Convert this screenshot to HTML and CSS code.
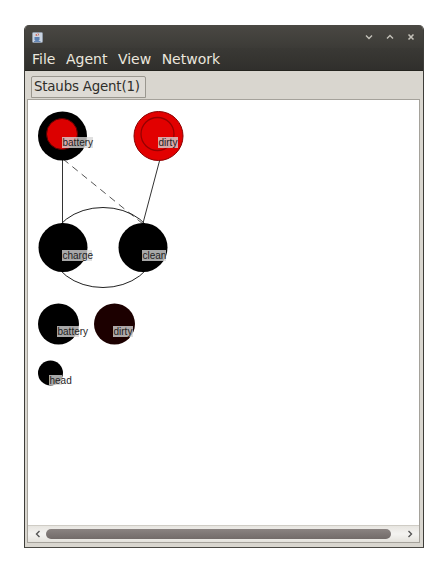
FILE: index.html
```html
<!DOCTYPE html>
<html>
<head>
<meta charset="utf-8">
<link rel="stylesheet" href="styles.css">
</head>
<body>
<div class="window">
  <div class="titlebar">
    <svg class="app-icon" width="11" height="11" viewBox="0 0 11 11">
      <rect x="0.5" y="0.5" width="10" height="10" rx="1" fill="#c9d3e0" stroke="#8e98a6"/>
      <path d="M4 2 q1 1 0 2 M6 1.5 q1 1 0 2" stroke="#d2452b" stroke-width="0.9" fill="none"/>
      <path d="M2.5 5 h5 v2.5 q0 1.5 -2.5 1.5 q-2.5 0 -2.5 -1.5z" fill="#5b7fb0"/>
      <rect x="2" y="9" width="6.5" height="0.9" fill="#5b7fb0"/>
    </svg>
    <div class="spacer"></div>
    <div class="controls">
      <svg width="8" height="6" viewBox="0 0 8 6"><path d="M1 1.5 L4 4.5 L7 1.5" stroke="#c4c1b9" stroke-width="1.4" fill="none"/></svg>
      <svg width="8" height="6" viewBox="0 0 8 6"><path d="M1 4.5 L4 1.5 L7 4.5" stroke="#c4c1b9" stroke-width="1.4" fill="none"/></svg>
      <svg width="8" height="8" viewBox="0 0 8 8"><path d="M1.5 1.5 L6.5 6.5 M6.5 1.5 L1.5 6.5" stroke="#c4c1b9" stroke-width="1.6" fill="none"/></svg>
    </div>
  </div>
  <div class="menubar">
    <span class="menu-item">File</span>
    <span class="menu-item">Agent</span>
    <span class="menu-item">View</span>
    <span class="menu-item">Network</span>
  </div>
  <div class="tabarea">
    <div class="tab">Staubs Agent(1)</div>
    <div class="panel">
      <div class="canvas">
        <svg class="graph" width="391" height="424" viewBox="28 101 391 424">
          <g class="edges">
            <line x1="62.5" y1="160" x2="62.5" y2="226" stroke="#333" stroke-width="1"/>
            <line x1="63" y1="160" x2="143" y2="225" stroke="#555" stroke-width="1" stroke-dasharray="7 5"/>
            <line x1="160" y1="160" x2="142.5" y2="226" stroke="#333" stroke-width="1"/>
            <ellipse cx="103" cy="248.5" rx="52" ry="40" fill="none" stroke="#222" stroke-width="1"/>
          </g>
          <g class="nodes">
            <circle cx="62.5" cy="137" r="24.5" fill="#000"/>
            <circle cx="62" cy="135" r="15.5" fill="#dc0000" stroke="#5a0000" stroke-width="1"/>

            <circle cx="158.5" cy="137" r="24.5" fill="#e20000" stroke="#8a0000" stroke-width="1"/>
            <circle cx="157.5" cy="135" r="16.5" fill="none" stroke="#960000" stroke-width="1.3"/>

            <circle cx="63" cy="248.5" r="24.5" fill="#000"/>
            <circle cx="143" cy="248.5" r="24.5" fill="#000"/>

            <circle cx="58.5" cy="325" r="20.5" fill="#000"/>
            <circle cx="114.5" cy="325" r="20.5" fill="#1c0000"/>

            <circle cx="50.5" cy="374" r="12.5" fill="#000"/>
          </g>
          <g class="labels">
            <rect x="62" y="138" width="31" height="11" class="lbl"/>
            <text x="62.5" y="147">battery</text>

            <rect x="158" y="138" width="20" height="11" class="lbl"/>
            <text x="158.5" y="147">dirty</text>

            <rect x="62" y="251" width="30" height="11" class="lbl"/>
            <text x="62.5" y="260">charge</text>

            <rect x="142" y="251" width="24" height="11" class="lbl"/>
            <text x="142.5" y="260">clean</text>

            <rect x="57" y="327" width="22" height="11" class="lbl"/>
            <text x="57.5" y="336">battery</text>

            <rect x="113" y="327" width="20" height="11" class="lbl"/>
            <text x="113.5" y="336">dirty</text>

            <rect x="49" y="376" width="13" height="10" class="lbl"/>
            <text x="49.5" y="385">head</text>
          </g>
        </svg>
      </div>
      <div class="hscroll">
        <div class="arrow arrow-left">
          <svg width="6" height="8" viewBox="0 0 6 8"><path d="M4.5 1 L1.5 4 L4.5 7" stroke="#555" stroke-width="1.4" fill="none"/></svg>
        </div>
        <div class="track">
          <div class="thumb"></div>
        </div>
        <div class="arrow arrow-right">
          <svg width="6" height="8" viewBox="0 0 6 8"><path d="M1.5 1 L4.5 4 L1.5 7" stroke="#555" stroke-width="1.4" fill="none"/></svg>
        </div>
      </div>
    </div>
  </div>
</div>
</body>
</html>
```
FILE: styles.css
```css
* { box-sizing: border-box; }
html, body { margin: 0; padding: 0; background: #ffffff; }
body { width: 440px; height: 572px; overflow: hidden; }

.window {
  margin: 25px 0 0 24px;
  width: 400px;
  height: 523px;
  display: flex;
  flex-direction: column;
  background: #d9d6cf;
  border-left: 1px solid #3e3d39;
  border-right: 1px solid #3e3d39;
  border-bottom: 1px solid #4a4944;
  border-radius: 5px 5px 0 0;
  overflow: hidden;
}

.titlebar {
  height: 23px;
  flex: none;
  display: flex;
  align-items: center;
  padding: 0 7px 0 7px;
  background: linear-gradient(#4a4843, #3c3b37);
}
.app-icon { display: block; margin-top: 2px; }
.spacer { flex: 1; }
.controls {
  display: flex;
  align-items: center;
  gap: 13px;
  margin-right: 1px;
}
.controls svg { display: block; }

.menubar {
  height: 23px;
  flex: none;
  display: flex;
  align-items: center;
  gap: 10.5px;
  padding: 0 0 0 7px;
  background: linear-gradient(#3a3935, #302f2c);
  border-bottom: 1px solid #25241f;
  color: #ebe7de;
  font-family: "DejaVu Sans", sans-serif;
  font-size: 14px;
  line-height: 23px;
}

.tabarea {
  flex: 1;
  display: flex;
  flex-direction: column;
  padding: 5px 3px 4px 2px;
  min-height: 0;
}

.tab {
  align-self: flex-start;
  margin-left: 4px;
  height: 22px;
  padding: 0 5px 0 2px;
  background: #dedbd5;
  border: 1px solid #9a978f;
  border-radius: 2px 2px 0 0;
  font-family: "DejaVu Sans", sans-serif;
  font-size: 13.4px;
  letter-spacing: -0.2px;
  line-height: 20px;
  color: #2f2e2a;
  margin-bottom: 1px;
}

.panel {
  flex: 1;
  display: flex;
  flex-direction: column;
  min-height: 0;
  border: 1px solid #a5a29b;
  background: #ffffff;
}

.canvas {
  flex: 1;
  min-height: 0;
  overflow: hidden;
  background: #ffffff;
}
.graph { display: block; }
.lbl { fill: rgba(215, 215, 215, 0.78); }
.labels text {
  font-family: "Liberation Sans", Arial, sans-serif;
  font-size: 10px;
  fill: #1e1e1e;
}

.hscroll {
  height: 17px;
  flex: none;
  display: flex;
  align-items: center;
  background: linear-gradient(#e7e5e0, #f4f3f1 50%, #e4e2dc);
  border-top: 1px solid #cfccc5;
  padding: 0 1px 1px 1px;
}
.arrow {
  width: 17px;
  height: 14px;
  display: flex;
  align-items: center;
  justify-content: center;
  flex: none;
}
.arrow svg { display: block; }
.track {
  flex: 1;
  height: 14px;
  display: flex;
  align-items: center;
}
.thumb {
  width: 345px;
  height: 10px;
  border-radius: 5px;
  background: linear-gradient(#8a8381, #726b69);
}
```
